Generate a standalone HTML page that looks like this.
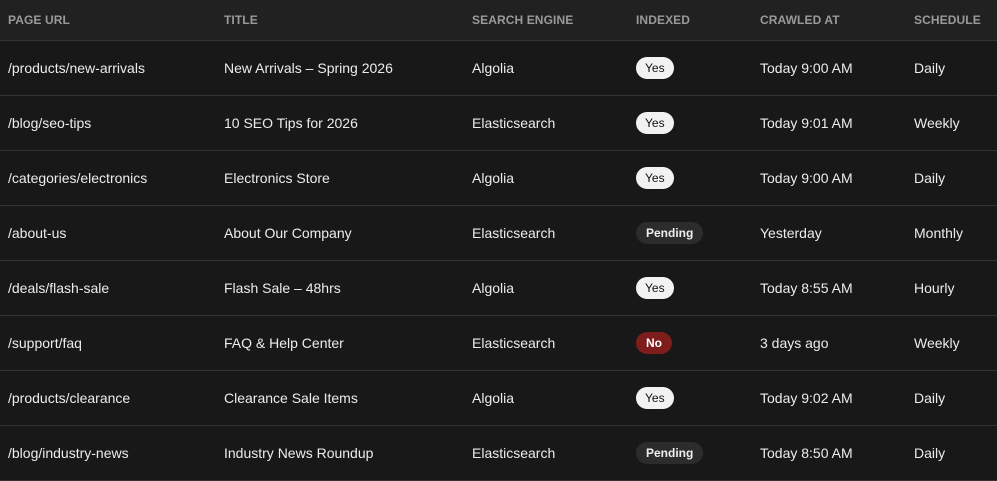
<!DOCTYPE html>
<html><head><style>
body{margin:0;background:#181818;width:997px;height:472px;overflow:hidden;font-family:"Liberation Sans",sans-serif;}
table{border-collapse:collapse;width:997px;table-layout:fixed}
th{background:#212121;color:#9a9a9a;font-size:12px;font-weight:bold;text-align:left;height:40px;padding:0 0 0 8px;letter-spacing:.1px;border-bottom:1px solid #333}
td{color:#ececec;font-size:14px;height:54px;padding:0 0 0 8px;border-bottom:1px solid #333;white-space:nowrap}
.b{display:inline-block;height:22px;line-height:22px;border-radius:11px;font-size:12px;font-weight:bold;padding:0 9px}
.y{background:#f2f2f2;color:#111;font-weight:normal}
.p{background:#2c2c2c;color:#eee;padding:0 10px}
.n{background:#7f1d1d;color:#fff;padding:0 10px}
</style></head><body>
<table>
<colgroup><col style="width:216px"><col style="width:248px"><col style="width:164px"><col style="width:124px"><col style="width:154px"><col></colgroup>
<tr><th>PAGE URL</th><th>TITLE</th><th>SEARCH ENGINE</th><th>INDEXED</th><th>CRAWLED AT</th><th>SCHEDULE</th></tr>
<tr><td>/products/new-arrivals</td><td>New Arrivals – Spring 2026</td><td>Algolia</td><td><span class="b y">Yes</span></td><td>Today 9:00 AM</td><td>Daily</td></tr>
<tr><td>/blog/seo-tips</td><td>10 SEO Tips for 2026</td><td>Elasticsearch</td><td><span class="b y">Yes</span></td><td>Today 9:01 AM</td><td>Weekly</td></tr>
<tr><td>/categories/electronics</td><td>Electronics Store</td><td>Algolia</td><td><span class="b y">Yes</span></td><td>Today 9:00 AM</td><td>Daily</td></tr>
<tr><td>/about-us</td><td>About Our Company</td><td>Elasticsearch</td><td><span class="b p">Pending</span></td><td>Yesterday</td><td>Monthly</td></tr>
<tr><td>/deals/flash-sale</td><td>Flash Sale – 48hrs</td><td>Algolia</td><td><span class="b y">Yes</span></td><td>Today 8:55 AM</td><td>Hourly</td></tr>
<tr><td>/support/faq</td><td>FAQ &amp; Help Center</td><td>Elasticsearch</td><td><span class="b n">No</span></td><td>3 days ago</td><td>Weekly</td></tr>
<tr><td>/products/clearance</td><td>Clearance Sale Items</td><td>Algolia</td><td><span class="b y">Yes</span></td><td>Today 9:02 AM</td><td>Daily</td></tr>
<tr><td>/blog/industry-news</td><td>Industry News Roundup</td><td>Elasticsearch</td><td><span class="b p">Pending</span></td><td>Today 8:50 AM</td><td>Daily</td></tr>
</table>
</body></html>
